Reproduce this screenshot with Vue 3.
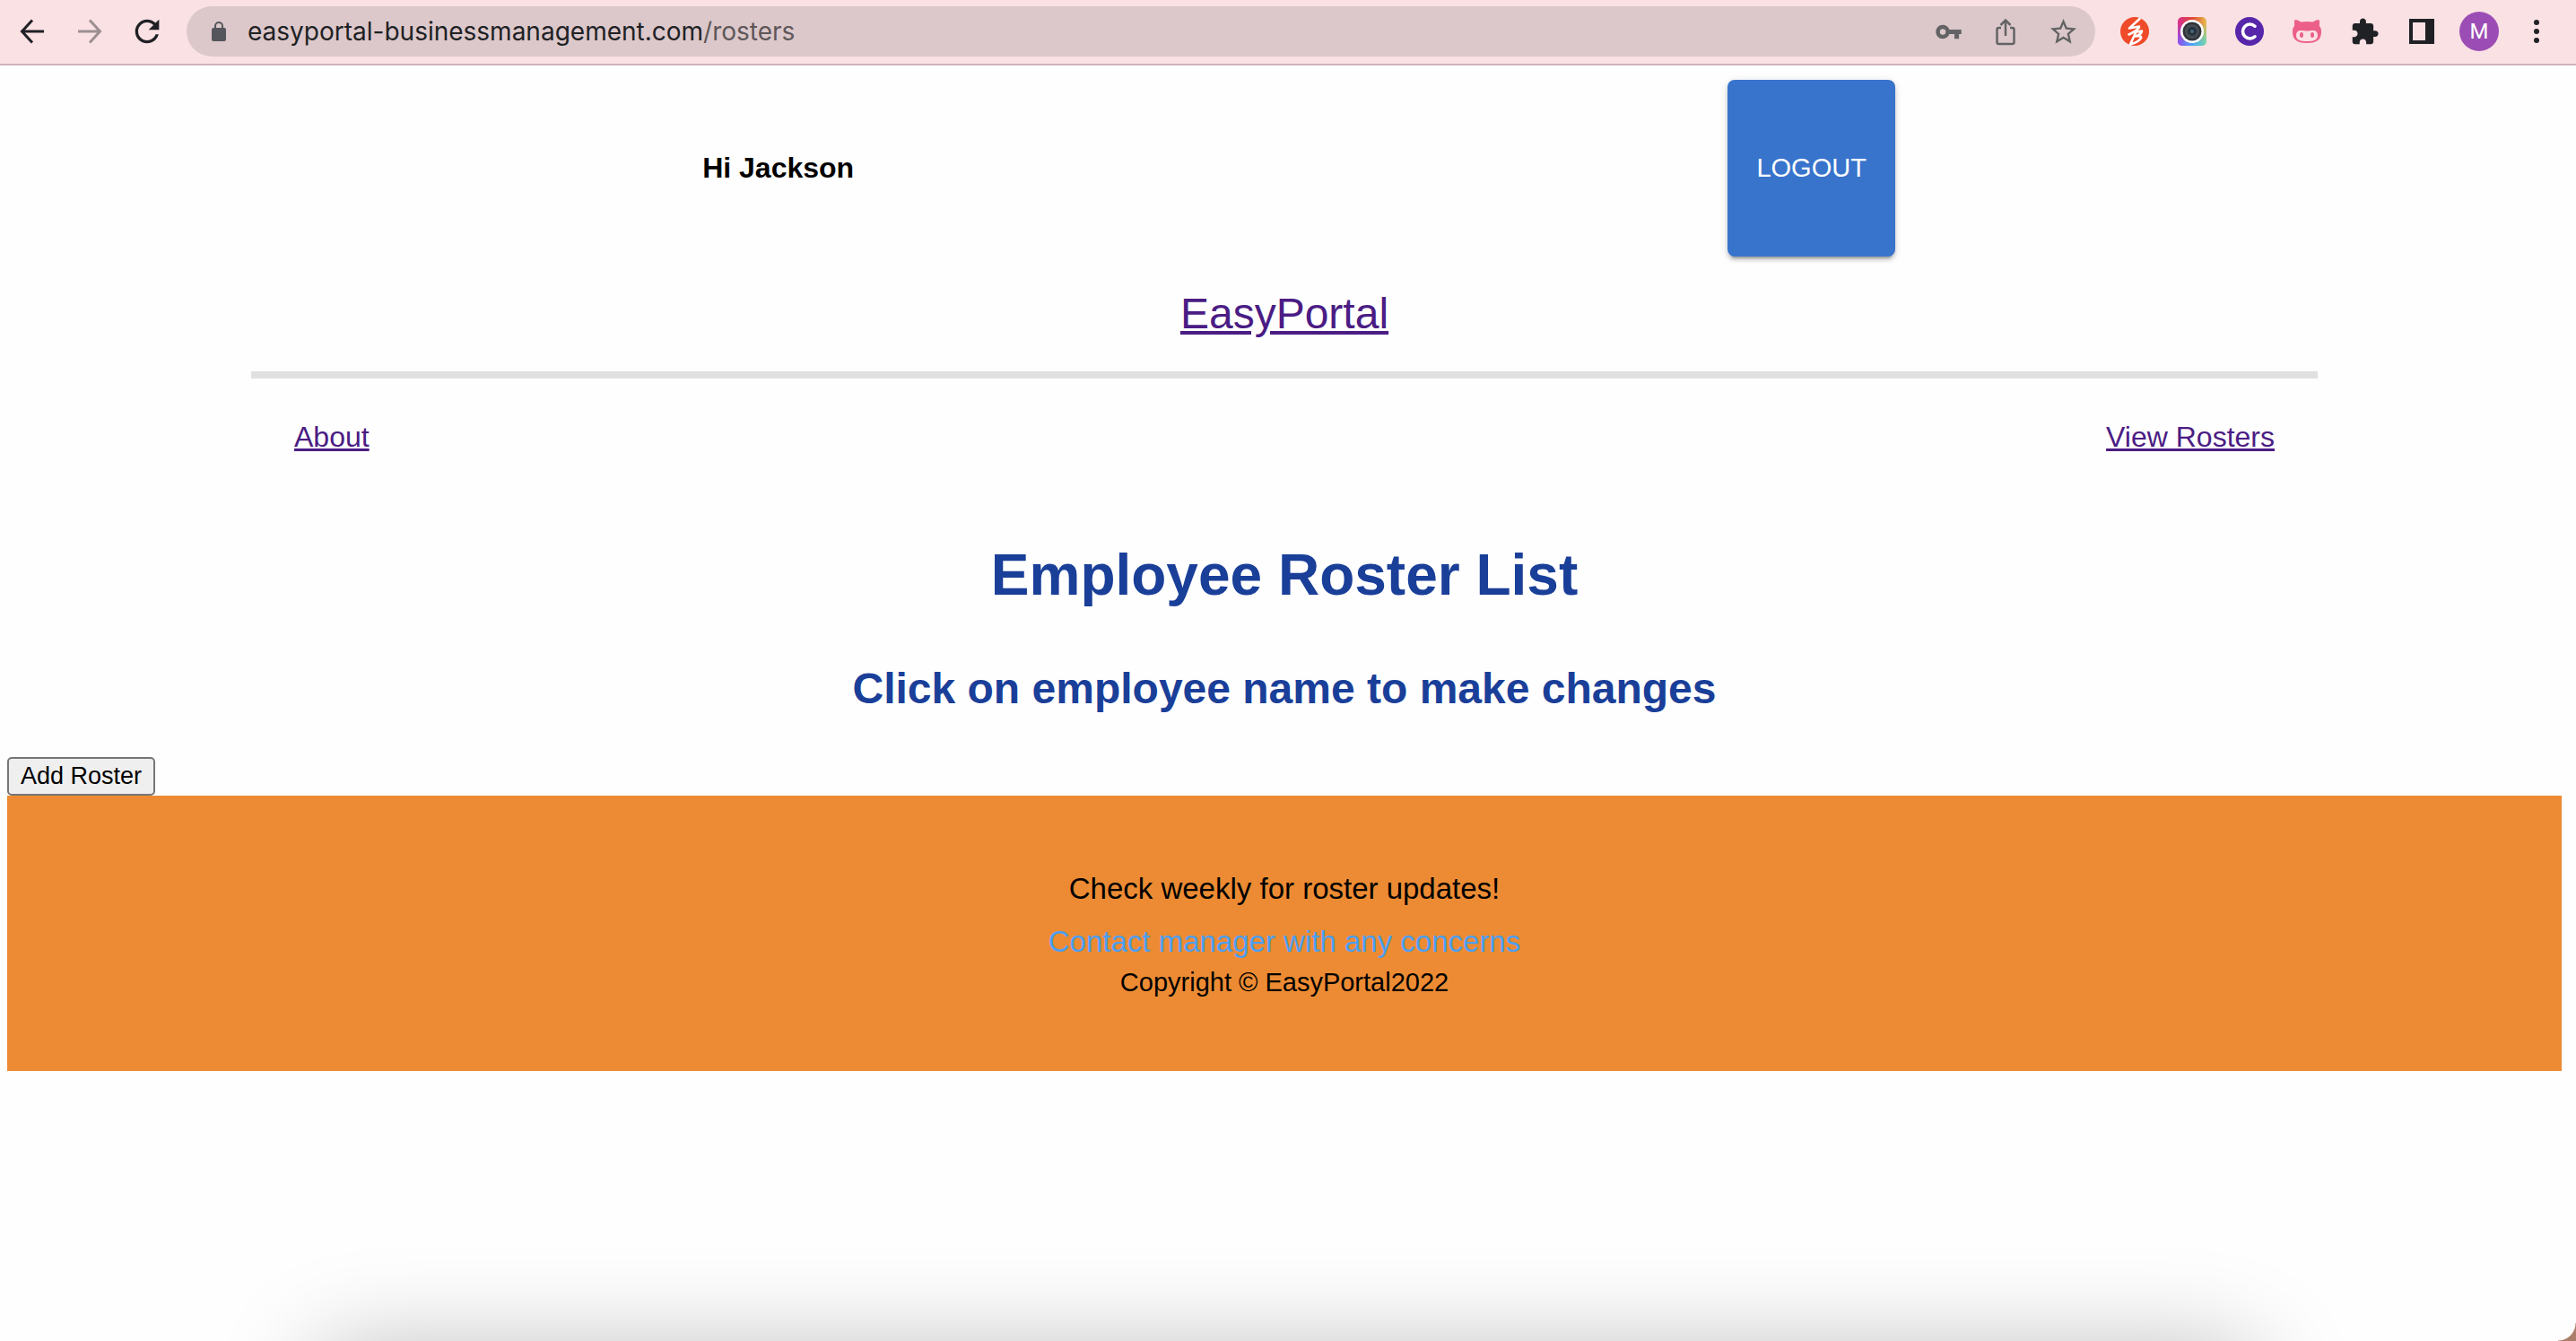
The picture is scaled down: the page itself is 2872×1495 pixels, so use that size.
<script setup>
const user = 'Jackson'
const host = 'easyportal-businessmanagement.com'
const path = '/rosters'
</script>

<template>
  <div class="window">
    <header class="toolbar">
      <nav class="tools" aria-label="Browser navigation">
        <button class="tool" aria-label="Back">
          <svg width="32" height="32" viewBox="0 0 32 32" fill="none" stroke="currentColor" stroke-width="3"><path d="M29 16H5M16 3.500L4.500 16 16 28.500" /></svg>
        </button>
        <button class="tool dim" aria-label="Forward">
          <svg width="32" height="32" viewBox="0 0 32 32" fill="none" stroke="currentColor" stroke-width="3"><path d="M3 16h24M16 3.500L27.500 16 16 28.500" /></svg>
        </button>
        <button class="tool" aria-label="Reload">
          <svg width="40" height="40" viewBox="0 0 24 24" fill="currentColor"><path d="M17.650 6.350C16.200 4.900 14.210 4 12 4c-4.420 0-7.990 3.580-7.990 8s3.570 8 7.990 8c3.730 0 6.840-2.550 7.730-6h-2.080c-.82 2.330-3.040 4-5.650 4-3.310 0-6-2.690-6-6s2.690-6 6-6c1.660 0 3.140.69 4.220 1.780L13 11h7V4l-2.350 2.350z" /></svg>
        </button>
      </nav>

      <div class="omnibox">
        <svg class="lock" width="24" height="24" viewBox="0 0 24 24"><rect x="4" y="8" width="16" height="15" rx="2" fill="#54565b" /><path d="M8 9V6a4 4 0 0 1 8 0v3" fill="none" stroke="#54565b" stroke-width="2" /></svg>
        <div class="url" role="textbox" aria-label="Address" tabindex="0">{{ host }}<span class="path">{{ path }}</span></div>
        <button class="tool muted" aria-label="Passwords">
          <svg width="31" height="31" viewBox="0 0 24 24" fill="currentColor"><path d="M12.650 10C11.830 7.670 9.610 6 7 6c-3.310 0-6 2.690-6 6s2.690 6 6 6c2.610 0 4.830-1.670 5.650-4H17v4h4v-4h2v-4H12.650zM7 14.500a2.500 2.500 0 1 1 0-5 2.500 2.500 0 0 1 0 5z" /></svg>
        </button>
        <button class="tool muted" aria-label="Share">
          <svg width="32" height="32" viewBox="0 0 32 32" fill="none" stroke="currentColor" stroke-width="2.500"><path d="M11 12H8.500a2 2 0 0 0-2 2v14a2 2 0 0 0 2 2h15a2 2 0 0 0 2-2V14a2 2 0 0 0-2-2H21M16 21V4M10.500 9L16 3.500 21.500 9" /></svg>
        </button>
        <button class="tool muted" aria-label="Bookmark">
          <svg width="35" height="35" viewBox="0 0 24 24" fill="currentColor"><path d="M22 9.240l-7.190-.62L12 2 9.190 8.630 2 9.240l5.460 4.730L5.820 21 12 17.270 18.180 21l-1.630-7.030L22 9.240zM12 15.400l-3.760 2.270 1-4.280-3.320-2.880 4.380-.38L12 6.100l1.710 4.040 4.380.38-3.320 2.880 1 4.280L12 15.400z" /></svg>
        </button>
      </div>

      <div class="tools">
        <button class="tool" aria-label="Bolt extension">
          <svg width="32" height="32" viewBox="0 0 32 32"><circle cx="16" cy="16" r="16" fill="#ef4a29" /><path d="M21.500 2L10 12.500L21 10.500Q21.500 13.500 9.500 19.500M17.500 16.500L11 30.500M18 16.500L24 15.500Q23.500 19.500 17 21.500Q24 20.500 23 23.500Q20 28 11 30.500" fill="none" stroke="#fff" stroke-width="2.600" stroke-linejoin="round" stroke-linecap="round" /></svg>
        </button>
        <button class="tool" aria-label="Camera extension">
          <svg width="32" height="32" viewBox="0 0 32 32">
            <defs>
              <linearGradient id="lensTop" x1="0" y1="0" x2="1" y2="0"><stop offset="0" stop-color="#d9308f" /><stop offset="0.500" stop-color="#dd4536" /><stop offset="1" stop-color="#e9bd4d" /></linearGradient>
              <linearGradient id="lensBottom" x1="0" y1="0" x2="1" y2="0"><stop offset="0" stop-color="#8b50f5" /><stop offset="0.500" stop-color="#4fa3f2" /><stop offset="1" stop-color="#6fdcb0" /></linearGradient>
              <linearGradient id="lensFade" x1="0" y1="0" x2="0" y2="1"><stop offset="0.200" stop-color="#000" /><stop offset="0.900" stop-color="#fff" /></linearGradient>
              <mask id="lensMask"><rect width="32" height="32" fill="url(#lensFade)" /></mask>
            </defs>
            <rect width="32" height="32" rx="5" fill="url(#lensTop)" />
            <rect width="32" height="32" rx="5" fill="url(#lensBottom)" mask="url(#lensMask)" />
            <circle cx="16" cy="16" r="13" fill="#fff" /><circle cx="16" cy="16" r="10.500" fill="#2f3439" /><circle cx="16" cy="16" r="8" fill="#454c53" /><circle cx="16" cy="16" r="5" fill="#26323c" /><circle cx="16" cy="16" r="2" fill="#456a80" />
          </svg>
        </button>
        <button class="tool" aria-label="Coupon extension">
          <svg width="32" height="32" viewBox="0 0 32 32"><circle cx="16" cy="16" r="16" fill="#5726ab" /><path d="M22 10.200a8 8 0 1 0 0 11.600" fill="none" stroke="#fff" stroke-width="3.600" stroke-linecap="round" /></svg>
        </button>
        <button class="tool" aria-label="Cat extension">
          <svg width="32" height="32" viewBox="0 0 32 32"><path d="M2.500 3C5 3.200 7.500 4.300 9.500 5.500Q16 4.300 22.500 5.500C24.500 4.300 27 3.200 29.500 3Q30.700 6 29.800 9.500Q32 12 32 16.500C32 26 26 29 16 29S0 26 0 16.500Q0 12 2.200 9.500Q1.300 6 2.500 3z" fill="#ec5f88" /><path d="M9 15c3 0 4 .5 7 .5s4-.5 7-.5q5 0 5 5.500C28 26 23 27 16 27S4 26 4 20.500Q4 15 9 15z" fill="#fae1e4" /><ellipse cx="10" cy="20" rx="2" ry="3" fill="#ec5f88" /><ellipse cx="22" cy="20" rx="2" ry="3" fill="#ec5f88" /></svg>
        </button>
        <button class="tool" aria-label="Extensions">
          <svg width="33" height="33" viewBox="0 0 24 24" fill="currentColor"><path d="M20.500 11H19V7c0-1.100-.9-2-2-2h-4V3.500C13 2.120 11.880 1 10.500 1S8 2.120 8 3.500V5H4c-1.100 0-1.990.9-1.990 2v3.800H3.500c1.490 0 2.700 1.210 2.700 2.700s-1.210 2.700-2.700 2.700H2V20c0 1.100.9 2 2 2h3.800v-1.500c0-1.490 1.210-2.700 2.700-2.700 1.490 0 2.700 1.210 2.700 2.700V22H17c1.100 0 2-.9 2-2v-4h1.500c1.380 0 2.500-1.120 2.500-2.500S21.880 11 20.500 11z" /></svg>
        </button>
        <button class="tool" aria-label="Side panel">
          <svg width="28" height="28" viewBox="0 0 28 28" fill="currentColor" fill-rule="evenodd"><path d="M0 0h28v28H0zM4 4v20h14V4z" /></svg>
        </button>
        <button class="tool" aria-label="Profile"><span class="avatar">M</span></button>
        <button class="tool" aria-label="Menu">
          <svg width="32" height="32" viewBox="0 0 32 32" fill="currentColor"><circle cx="16" cy="6" r="3" /><circle cx="16" cy="16" r="3" /><circle cx="16" cy="26" r="3" /></svg>
        </button>
      </div>
    </header>

    <main class="page">
      <div class="masthead">
        <div class="greeting-row">
          <h3 class="greeting">Hi {{ user }}</h3>
          <button class="logout">LOGOUT</button>
        </div>
        <div class="brand"><a href="#">EasyPortal</a></div>
        <nav class="links">
          <a href="#about">About</a>
          <a href="#rosters">View Rosters</a>
        </nav>
      </div>

      <h1>Employee Roster List</h1>
      <h2>Click on employee name to make changes</h2>
      <button class="add">Add Roster</button>

      <footer class="footer">
        <p class="notice">Check weekly for roster updates!</p>
        <a class="contact" href="#contact">Contact manager with any concerns</a>
        <p class="copyright">Copyright © EasyPortal2022</p>
      </footer>
    </main>

    <div class="dock-shadow"></div>
    <div class="corner"></div>
  </div>
</template>

<style>
body {
  margin: 0;
  background: #fefefe;
}
</style>

<style scoped>
.window {
  position: relative;
  display: flex;
  flex-direction: column;
  min-height: 100vh;
  overflow: hidden;
  background: #fefefe;
  color: #000;
  font-family: "Liberation Sans", Arial, sans-serif;
  font-size: 32px;
  line-height: 36px;
}

button {
  font-family: inherit;
  cursor: pointer;
}

.toolbar {
  display: flex;
  align-items: center;
  gap: 12px;
  padding: 7px 12px 8px 4px;
  border-bottom: 2px solid #cbb3b8;
  background: #fae1e4;
}

.tools {
  display: flex;
}

.tool {
  display: flex;
  align-items: center;
  justify-content: center;
  width: 64px;
  height: 56px;
  padding: 0;
  border: 0;
  background: none;
  color: #202124;
}

.tool.dim {
  color: #9c8f92;
}

.tool.muted {
  color: #636365;
}

.omnibox {
  display: flex;
  flex: 1;
  align-items: center;
  padding: 0 4px 0 24px;
  border-radius: 28px;
  background: #dcc8ca;
}

.lock {
  flex: none;
}

.url {
  flex: 1;
  padding-left: 20px;
  color: #202124;
  font-family: Inter, sans-serif;
  font-size: 28px;
}

.path {
  color: #5f5759;
}

.avatar {
  width: 44px;
  border-radius: 50%;
  background: #9c4db5;
  color: #fff;
  font-family: Roboto, sans-serif;
  font-size: 24px;
  line-height: 44px;
}

.page {
  padding: 16px 16px 0 8px;
}

.masthead {
  margin: 0 272px;
}

.greeting-row {
  display: flex;
  justify-content: space-around;
}

.greeting {
  margin: 0;
  padding: 80px 32px;
  font-size: 32px;
  line-height: 37px;
}

.logout {
  padding: 0 32px;
  border: 0;
  border-radius: 8px;
  background: #3874cc;
  box-shadow: 0 6px 2px -4px rgba(0, 0, 0, 0.2), 0 4px 4px rgba(0, 0, 0, 0.14), 0 2px 10px rgba(0, 0, 0, 0.12);
  color: #fff;
  font-size: 29px;
}

.brand {
  padding: 36px 0;
  border-bottom: 8px solid #e0e0e0;
  font-size: 48px;
  line-height: 56px;
  text-align: center;
}

.brand a,
.links a {
  color: #4b1c84;
}

.links {
  display: flex;
  justify-content: space-between;
  padding: 47px 48px 0;
}

h1,
h2 {
  margin: 0;
  color: #1a3f99;
  text-align: center;
}

h1 {
  padding-top: 100px;
  font-size: 64px;
  line-height: 72px;
}

h2 {
  padding: 63px 0 48px;
  font-size: 48px;
  line-height: 56px;
}

.add {
  display: block;
  padding: 0 13px;
  border: 2px solid #767676;
  border-radius: 5px;
  background: #efefef;
  color: #000;
  font-size: 27px;
  line-height: 39px;
}

.footer {
  display: flex;
  flex-direction: column;
  align-items: center;
  padding: 86px 0 83px;
  background: #ec8b33;
  font-size: 33px;
}

.footer p {
  margin: 0;
}

.contact {
  padding: 23px 0 11px;
  color: #4a9ff5;
  text-decoration: none;
}

.footer .copyright {
  font-size: 29px;
  line-height: 32px;
}

/* soft shade cast upwards by the dock under the window */
.dock-shadow {
  position: absolute;
  top: calc(100% + 10px);
  right: 357px;
  left: 350px;
  height: 200px;
  border-radius: 40px;
  box-shadow: 0 0 110px rgba(0, 0, 0, 0.27);
}

/* desktop showing behind the rounded window corner */
.corner {
  position: absolute;
  right: 0;
  bottom: 0;
  width: 20px;
  height: 20px;
  background: radial-gradient(circle at 0 0, transparent 19px, #ab7d6a 20px);
}
</style>
